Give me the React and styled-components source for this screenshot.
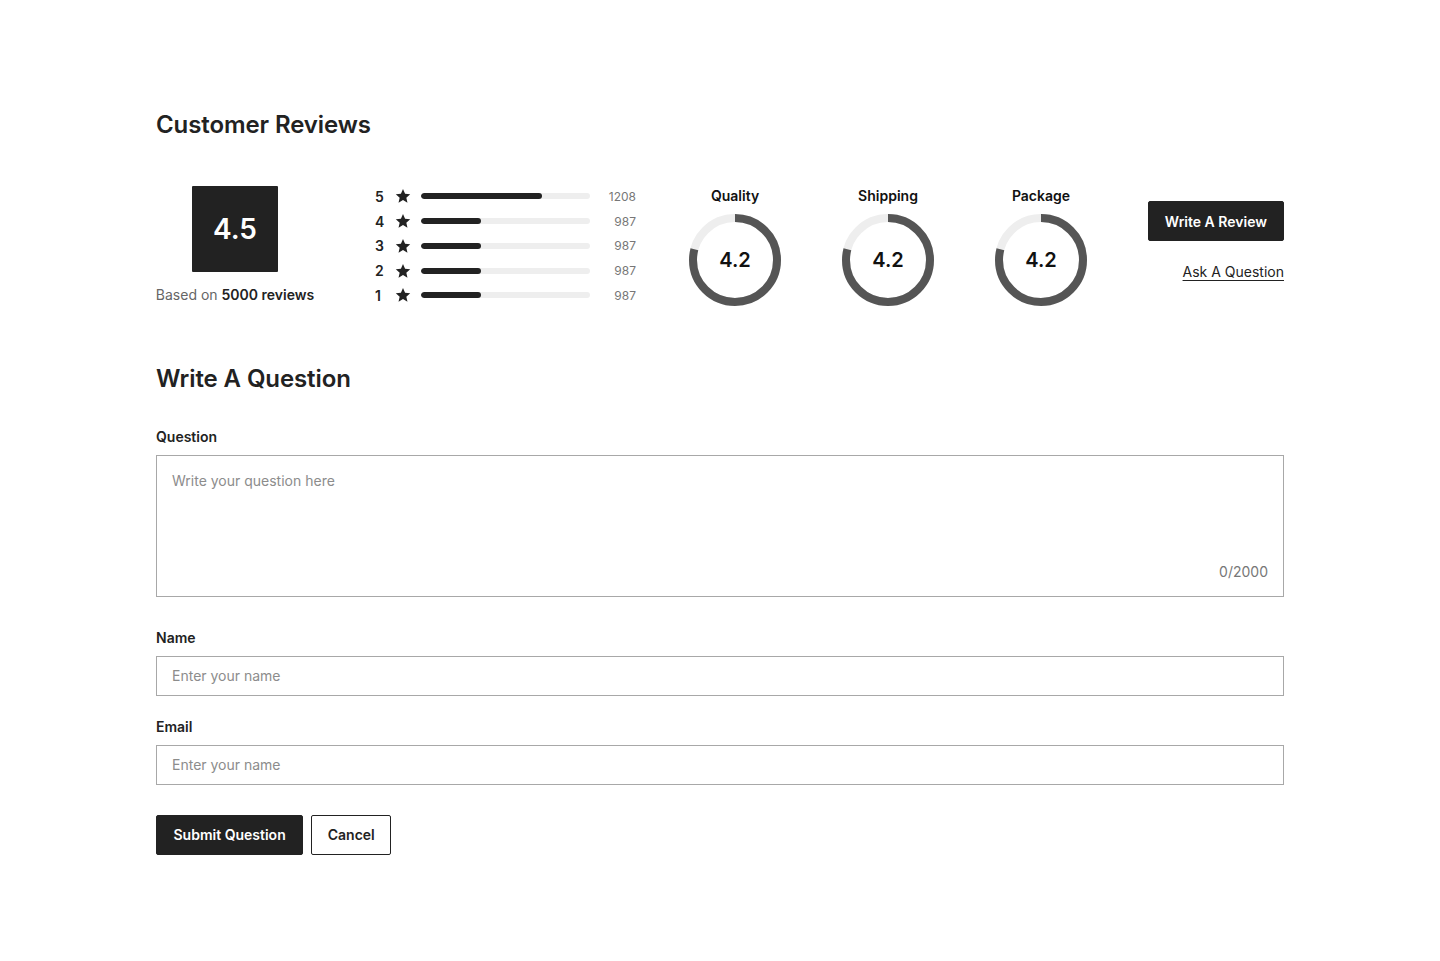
import React from "react";
import styled, { createGlobalStyle } from "styled-components";

const GlobalStyle = createGlobalStyle`
  * { box-sizing: border-box; }
  body {
    margin: 0;
    background: #fff;
    font-family: Inter, "Noto Sans", sans-serif;
    color: #222;
  }
`;

const Page = styled.main`
  width: 1128px;
  margin: 0 auto;
  padding: 110px 0 80px;
`;

const Heading = styled.h2`
  margin: 0;
  font-size: 24px;
  line-height: 29px;
  font-weight: 600;
  color: #222;
  letter-spacing: -0.1px;
`;

const Summary = styled.section`
  display: flex;
  align-items: flex-start;
  margin-top: 47px;
`;

const ScoreBlock = styled.div`
  display: flex;
  flex-direction: column;
  align-items: center;
  width: 158px;
`;

const ScoreBox = styled.div`
  width: 86px;
  height: 86px;
  background: #222;
  color: #fff;
  display: flex;
  align-items: center;
  justify-content: center;
  font-size: 28px;
  font-weight: 600;
  border-radius: 1px;
`;

const BasedOn = styled.p`
  margin: 14px 0 0;
  font-size: 14px;
  line-height: 17px;
  color: #666;
  white-space: nowrap;
  strong {
    color: #222;
    font-weight: 600;
  }
`;

const Ratings = styled.div`
  margin-left: 61px;
  margin-top: -2px;
  display: flex;
  flex-direction: column;
`;

const RatingRow = styled.div`
  display: flex;
  align-items: center;
  height: 24.75px;
`;

const RowNum = styled.span`
  width: 12px;
  font-size: 14px;
  font-weight: 600;
  color: #222;
`;

const StarIcon = styled.svg`
  width: 16px;
  height: 16px;
  margin-left: 8px;
  flex: none;
`;

const Track = styled.div`
  margin-left: 10px;
  width: 169px;
  height: 6px;
  border-radius: 3px;
  background: #eeeeee;
  overflow: hidden;
`;

const Fill = styled.div`
  height: 100%;
  border-radius: 3px;
  background: #222;
`;

const Count = styled.span`
  width: 46px;
  text-align: right;
  font-size: 12px;
  color: #777;
`;

const Metrics = styled.div`
  margin-left: 53px;
  display: flex;
  gap: 61px;
`;

const Metric = styled.div`
  width: 92px;
  display: flex;
  flex-direction: column;
  align-items: center;
`;

const MetricLabel = styled.span`
  font-size: 14px;
  line-height: 17px;
  font-weight: 600;
  color: #111;
  margin-top: 1px;
`;

const Ring = styled.div`
  position: relative;
  width: 92px;
  height: 92px;
  margin-top: 10px;
  svg {
    display: block;
  }
`;

const RingValue = styled.span`
  position: absolute;
  inset: 0;
  display: flex;
  align-items: center;
  justify-content: center;
  font-size: 20px;
  font-weight: 600;
  color: #111;
`;

const Actions = styled.div`
  margin-left: auto;
  margin-top: 15px;
  display: flex;
  flex-direction: column;
  align-items: flex-end;
`;

const DarkButton = styled.button`
  height: 40px;
  padding: 0 ${(p) => p.$pad || 16}px;
  background: #222;
  color: #fff;
  border: 1px solid #222;
  border-radius: 2px;
  font-family: inherit;
  font-size: 14px;
  font-weight: 600;
  cursor: pointer;
`;

const OutlineButton = styled(DarkButton)`
  background: #fff;
  color: #222;
`;

const TextLink = styled.a`
  margin-top: 22px;
  font-size: 14px;
  line-height: 17px;
  color: #222;
  text-decoration: underline;
  text-underline-offset: 3px;
  cursor: pointer;
`;

const QuestionSection = styled.section`
  margin-top: 56px;
`;

const Form = styled.form`
  margin-top: 35px;
  display: flex;
  flex-direction: column;
`;

const Field = styled.div`
  display: flex;
  flex-direction: column;
  margin-bottom: ${(p) => p.$gap}px;
`;

const Label = styled.label`
  font-size: 14px;
  line-height: 17px;
  font-weight: 600;
  color: #222;
  margin-bottom: 10px;
`;

const AreaWrap = styled.div`
  position: relative;
`;

const TextArea = styled.textarea`
  display: block;
  width: 100%;
  height: 142px;
  resize: none;
  border: 1px solid #a8a8a8;
  border-radius: 0;
  padding: 15px 15px;
  font-family: inherit;
  font-size: 14px;
  line-height: 20px;
  color: #222;
  outline: none;
  &::placeholder {
    color: #8c8c8c;
  }
`;

const Counter = styled.span`
  position: absolute;
  right: 16px;
  bottom: 17px;
  font-size: 14px;
  line-height: 17px;
  color: #777;
`;

const Input = styled.input`
  width: 100%;
  height: 40px;
  border: 1px solid #a8a8a8;
  border-radius: 0;
  padding: 0 15px;
  font-family: inherit;
  font-size: 14px;
  color: #222;
  outline: none;
  &::placeholder {
    color: #8c8c8c;
  }
`;

const ButtonRow = styled.div`
  display: flex;
  gap: 8px;
`;

const Star = () => (
  <StarIcon viewBox="0 0 24 24">
    <path
      fill="#222"
      d="M12 1.6l3.1 7.1 7.7.7-5.8 5.1 1.7 7.6L12 18.1l-6.7 4 1.7-7.6L1.2 9.4l7.7-.7z"
    />
  </StarIcon>
);

const CircleScore = ({ value }) => {
  const r = 42;
  const c = 2 * Math.PI * r;
  const pct = 0.79;
  return (
    <Ring>
      <svg width="92" height="92" viewBox="0 0 92 92">
        <circle cx="46" cy="46" r={r} fill="none" stroke="#eeeeee" strokeWidth="8" />
        <circle
          cx="46"
          cy="46"
          r={r}
          fill="none"
          stroke="#555555"
          strokeWidth="8"
          strokeDasharray={`${c * pct} ${c}`}
          transform="rotate(-90 46 46)"
        />
      </svg>
      <RingValue>{value}</RingValue>
    </Ring>
  );
};

const rows = [
  { n: 5, pct: 71.6, count: 1208 },
  { n: 4, pct: 35.5, count: 987 },
  { n: 3, pct: 35.5, count: 987 },
  { n: 2, pct: 35.5, count: 987 },
  { n: 1, pct: 35.5, count: 987 },
];

const metrics = ["Quality", "Shipping", "Package"];

export default function App() {
  return (
    <>
      <GlobalStyle />
      <Page>
        <Heading>Customer Reviews</Heading>
        <Summary>
          <ScoreBlock>
            <ScoreBox>4.5</ScoreBox>
            <BasedOn>
              Based on <strong>5000 reviews</strong>
            </BasedOn>
          </ScoreBlock>
          <Ratings>
            {rows.map((r) => (
              <RatingRow key={r.n}>
                <RowNum>{r.n}</RowNum>
                <Star />
                <Track>
                  <Fill style={{ width: `${r.pct}%` }} />
                </Track>
                <Count>{r.count}</Count>
              </RatingRow>
            ))}
          </Ratings>
          <Metrics>
            {metrics.map((m) => (
              <Metric key={m}>
                <MetricLabel>{m}</MetricLabel>
                <CircleScore value="4.2" />
              </Metric>
            ))}
          </Metrics>
          <Actions>
            <DarkButton $pad={16}>Write A Review</DarkButton>
            <TextLink>Ask A Question</TextLink>
          </Actions>
        </Summary>

        <QuestionSection>
          <Heading>Write A Question</Heading>
          <Form onSubmit={(e) => e.preventDefault()}>
            <Field $gap={32}>
              <Label>Question</Label>
              <AreaWrap>
                <TextArea placeholder="Write your question here" />
                <Counter>0/2000</Counter>
              </AreaWrap>
            </Field>
            <Field $gap={22}>
              <Label>Name</Label>
              <Input placeholder="Enter your name" />
            </Field>
            <Field $gap={30}>
              <Label>Email</Label>
              <Input placeholder="Enter your name" />
            </Field>
            <ButtonRow>
              <DarkButton type="submit" $pad={16.5}>Submit Question</DarkButton>
              <OutlineButton type="button" $pad={15.5}>Cancel</OutlineButton>
            </ButtonRow>
          </Form>
        </QuestionSection>
      </Page>
    </>
  );
}
